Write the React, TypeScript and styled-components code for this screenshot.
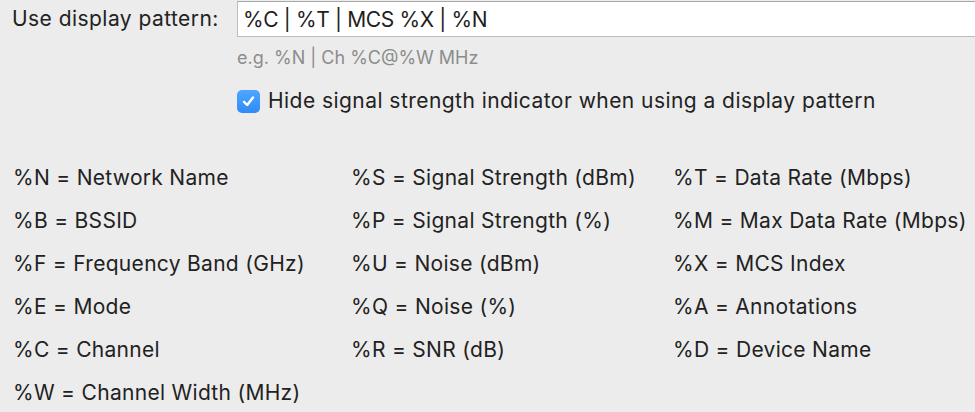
import React from "react";
import styled, { createGlobalStyle } from "styled-components";

const Global = createGlobalStyle`
  html, body { margin: 0; padding: 0; background: #ececec; }
  body { font-family: Inter, "Liberation Sans", sans-serif; color: #222; -webkit-font-smoothing: antialiased; }
`;

const Page = styled.div`
  width: 975px;
  height: 412px;
  overflow: hidden;
  background: #ececec;
  box-sizing: border-box;
  padding-top: 1px;
`;

const FieldRow = styled.div`
  display: grid;
  grid-template-columns: 237px 1fr;
  align-items: start;
`;

const Label = styled.label`
  font-size: 21px;
  letter-spacing: 0.45px;
  padding-left: 12px;
  line-height: 36px;
  height: 36px;
`;

const Options = styled.div`
  display: flex;
  flex-direction: column;
`;

const Input = styled.input`
  box-sizing: border-box;
  width: 760px;
  height: 36px;
  border: 1px solid #bdbdbd;
  border-top-color: #a8a8a8;
  background: #fff;
  font-family: inherit;
  font-size: 21px;
  letter-spacing: -0.35px;
  color: #1e1e1e;
  padding: 0 5px;
  outline: none;
  margin: 0;
`;

const Hint = styled.div`
  font-size: 18px;
  color: #8c8c8c;
  margin-top: 10px;
  line-height: 22px;
`;

const CheckRow = styled.label`
  display: flex;
  align-items: center;
  gap: 8px;
  margin-top: 20px;
  font-size: 21px;
  letter-spacing: 0.45px;
  line-height: 24px;
`;

const Box = styled.span`
  width: 23px;
  height: 23px;
  border-radius: 5px;
  background: linear-gradient(#4ea6ff, #2f8cf6);
  display: flex;
  align-items: center;
  justify-content: center;
  flex: none;
`;

const Legend = styled.div`
  display: grid;
  grid-template-columns: 338px 322px 1fr;
  grid-auto-rows: 43px;
  padding-left: 13px;
  margin-top: 53px;
  font-size: 21px;
  letter-spacing: 0.3px;
`;

const Item = styled.div`
  line-height: 24px;
  white-space: nowrap;
`;

const items = [
  "%N = Network Name",
  "%S = Signal Strength (dBm)",
  "%T = Data Rate (Mbps)",
  "%B = BSSID",
  "%P = Signal Strength (%)",
  "%M = Max Data Rate (Mbps)",
  "%F = Frequency Band (GHz)",
  "%U = Noise (dBm)",
  "%X = MCS Index",
  "%E = Mode",
  "%Q = Noise (%)",
  "%A = Annotations",
  "%C = Channel",
  "%R = SNR (dB)",
  "%D = Device Name",
  "%W = Channel Width (MHz)",
];

export default function App() {
  return (
    <Page>
      <Global />
      <FieldRow>
        <Label htmlFor="pattern">Use display pattern:</Label>
        <Options>
          <Input id="pattern" defaultValue="%C | %T | MCS %X | %N" />
          <Hint>e.g. %N | Ch %C@%W MHz</Hint>
          <CheckRow>
            <Box>
              <svg width="15" height="15" viewBox="0 0 15 15">
                <path d="M3 7.8 L6.2 11 L12 3.5" fill="none" stroke="#fff" strokeWidth="2.4" strokeLinecap="round" strokeLinejoin="round" />
              </svg>
            </Box>
            Hide signal strength indicator when using a display pattern
          </CheckRow>
        </Options>
      </FieldRow>
      <Legend>
        {items.map((t) => (
          <Item key={t}>{t}</Item>
        ))}
      </Legend>
    </Page>
  );
}
